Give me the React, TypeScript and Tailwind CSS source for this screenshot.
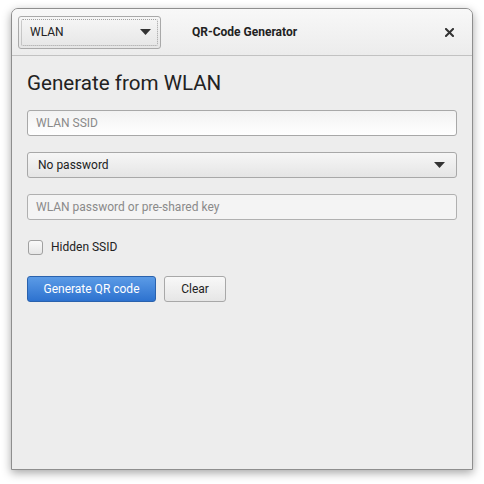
import React from "react";

function Caret() {
  return (
    <svg width="11" height="6" viewBox="0 0 11 6">
      <path d="M0 0 H11 L5.5 6 Z" fill="#333" />
    </svg>
  );
}

export default function App() {
  const font = { fontFamily: "Roboto, 'Noto Sans', sans-serif" };
  return (
    <div className="w-[484px] h-[484px] bg-white pt-[8px] pl-[11px]" style={font}>
      <div className="w-[462px] h-[462px] border border-[#8e8e8e] rounded-t-[7px] bg-[#ededed] shadow-[0_3px_10px_rgba(0,0,0,0.35)] flex flex-col overflow-hidden">
        <div className="h-[47px] shrink-0 border-b border-[#c2c2c2] bg-gradient-to-b from-[#f8f8f8] to-[#ececec] flex items-center pl-[6px] pr-[18px]">
          <div className="w-[143px] h-[33px] rounded-[3px] border border-[#a9a9a9] bg-gradient-to-b from-[#f6f6f6] to-[#e6e6e6] p-[2px]">
            <div className="w-full h-full border border-dotted border-[#a0a0a0] rounded-[2px] flex items-center pl-[8px] pr-[6px] justify-between">
              <span className="text-[12px] text-[#222]">WLAN</span>
              <Caret />
            </div>
          </div>
          <span className="ml-[31px] text-[12px] font-bold text-[#222]">QR-Code Generator</span>
          <span className="ml-auto">
            <svg width="9" height="9" viewBox="0 0 9 9">
              <path d="M1 1 L8 8 M8 1 L1 8" stroke="#333" strokeWidth="2" strokeLinecap="square" />
            </svg>
          </span>
        </div>
        <div className="flex flex-col pl-[15px] pr-[15px] pt-[13px]">
          <h1 className="text-[20.6px] leading-[28px] text-[#222]">Generate from WLAN</h1>
          <div className="mt-[13px] h-[26px] rounded-[3px] border border-[#a8a8a8] bg-gradient-to-b from-[#f2f2f2] to-[#ffffff] flex items-center pl-[8px] text-[12px] text-[#8a8a8a]">
            WLAN SSID
          </div>
          <div className="mt-[16px] h-[26px] rounded-[3px] border border-[#a8a8a8] bg-gradient-to-b from-[#f6f6f6] to-[#e5e5e5] flex items-center justify-between pl-[10px] pr-[11px] text-[12px] text-[#222]">
            <span>No password</span>
            <Caret />
          </div>
          <div className="mt-[16px] h-[26px] rounded-[3px] border border-[#b0b0b0] bg-[#f4f4f4] flex items-center pl-[8px] text-[12px] text-[#8a8a8a]">
            WLAN password or pre-shared key
          </div>
          <div className="mt-[19px] h-[16px] flex items-center">
            <div className="w-[15px] h-[15px] ml-[1px] rounded-[3px] border border-[#a0a0a0] bg-gradient-to-b from-[#fafafa] to-[#e6e6e6]" />
            <span className="ml-[8px] text-[12px] text-[#222]">Hidden SSID</span>
          </div>
          <div className="mt-[21px] flex gap-[8px]">
            <div className="w-[129px] h-[26px] rounded-[3px] border border-[#2a62ad] bg-gradient-to-b from-[#5b9be6] to-[#2d72cf] flex items-center justify-center text-[12px] text-white">
              Generate QR code
            </div>
            <div className="w-[62px] h-[26px] rounded-[3px] border border-[#a8a8a8] bg-gradient-to-b from-[#f8f8f8] to-[#e6e6e6] flex items-center justify-center text-[12px] text-[#222]">
              Clear
            </div>
          </div>
        </div>
      </div>
    </div>
  );
}
